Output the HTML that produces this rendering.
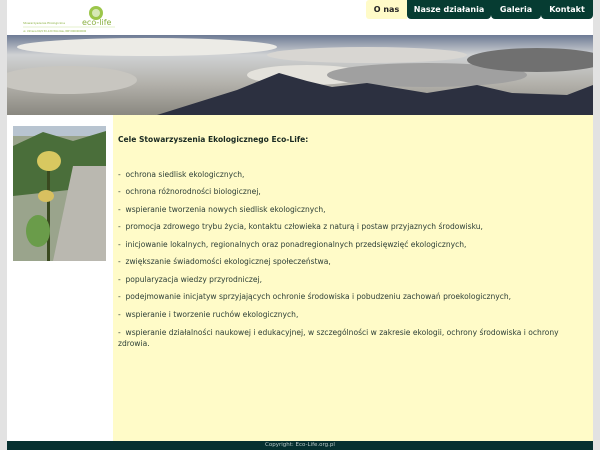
<!DOCTYPE html>
<html><head><meta charset="utf-8"><style>
*{margin:0;padding:0;box-sizing:border-box}
body{width:600px;height:450px;background:#e2e2e2;font-family:"DejaVu Sans",sans-serif;overflow:hidden;position:relative}
#wrap{position:absolute;left:7px;top:0;width:586px;height:450px;background:#fff}
.nav{position:absolute;top:0;height:19px;font-size:8px;font-weight:bold;line-height:19px;text-align:center;color:#fff;background:#063c32}
.ban{position:absolute;left:0;top:35px;width:586px;height:80px}
.left{position:absolute;left:0;top:115px;width:106px;height:326px;background:#fff}
.main{position:absolute;left:106px;top:115px;width:480px;height:326px;background:#fffbc8;color:#2c3e36;font-size:7.55px}
.main p{position:absolute;left:5px;white-space:nowrap}
.foot{position:absolute;left:0;top:441px;width:586px;height:9px;background:#063030;color:#b8c8c8;font-size:5.5px;text-align:center;line-height:9px}
</style></head><body><div id="wrap">
<svg style="position:absolute;left:14px;top:2px" width="100" height="32">
<circle cx="75" cy="11" r="7" fill="#9cc64a"/><circle cx="75" cy="11" r="4" fill="#fff" opacity=".6"/>
<text x="2" y="22" font-size="3" fill="#8ab040" font-family="DejaVu Sans">Stowarzyszenie Ekologiczne</text>
<text x="61" y="23" font-size="8" fill="#8ab040" font-family="DejaVu Sans">eco-life</text>
<line x1="2" y1="25" x2="94" y2="25" stroke="#cde39a" stroke-width=".5"/>
<text x="2" y="30" font-size="2.5" fill="#8ab040" font-family="DejaVu Sans">ul. Ulmana 60/4 50-120 Wrocław, NIP 0000000000</text>
</svg>
<div class="nav" style="left:359px;width:41px;background:#fffbc8;color:#222;border-radius:3px 0 0 3px">O nas</div>
<div class="nav" style="left:400px;width:84px;border-radius:0 0 4px 4px">Nasze działania</div>
<div class="nav" style="left:484px;width:50px;border-radius:0 0 4px 4px">Galeria</div>
<div class="nav" style="left:534px;width:52px;border-radius:0 0 4px 4px">Kontakt</div>
<svg class="ban" viewBox="0 0 586 80" preserveAspectRatio="none">
<defs><linearGradient id="g" x1="0" y1="0" x2="0" y2="1"><stop offset="0" stop-color="#6c7a94"/><stop offset=".25" stop-color="#d0d2d4"/><stop offset=".6" stop-color="#b4b2ac"/><stop offset="1" stop-color="#8a8880"/></linearGradient></defs>
<rect width="586" height="80" fill="url(#g)"/>
<ellipse cx="140" cy="12" rx="130" ry="9" fill="#ecebe6"/>
<ellipse cx="60" cy="45" rx="70" ry="14" fill="#c8c6c0"/>
<ellipse cx="300" cy="40" rx="60" ry="10" fill="#e4e2dc"/>
<ellipse cx="360" cy="20" rx="100" ry="8" fill="#d8d6d2"/>
<ellipse cx="420" cy="40" rx="100" ry="12" fill="#a0a0a0"/>
<ellipse cx="530" cy="25" rx="70" ry="12" fill="#707070"/>
<path d="M150 80 L230 55 L272 38 L300 46 L325 52 L360 48 L420 58 L470 50 L505 58 L560 60 L586 50 L586 80Z" fill="#2c3040"/>
</svg>
<div class="left"><svg style="position:absolute;left:6px;top:11px" width="93" height="135">
<rect width="93" height="135" fill="#9aa48c"/><rect width="93" height="10" fill="#b8c4d0"/>
<path d="M0 20 L30 6 L60 15 L93 5 L93 60 L0 70Z" fill="#4a6e3a"/>
<path d="M40 135 L60 40 L93 40 L93 135Z" fill="#bab8b0"/>
<rect x="34" y="35" width="3" height="100" fill="#3a4a20"/>
<ellipse cx="36" cy="35" rx="12" ry="10" fill="#d8c860"/><ellipse cx="33" cy="70" rx="8" ry="6" fill="#d8c060"/>
<ellipse cx="25" cy="105" rx="12" ry="16" fill="#6a9c4a"/></svg></div>
<div class="main">
<p style="top:20px;font-weight:bold;color:#1a2a22">Cele Stowarzyszenia Ekologicznego Eco-Life:</p>
<p style="top:55px">-&nbsp; ochrona siedlisk ekologicznych,</p>
<p style="top:72px">-&nbsp; ochrona różnorodności biologicznej,</p>
<p style="top:90px">-&nbsp; wspieranie tworzenia nowych siedlisk ekologicznych,</p>
<p style="top:107px">-&nbsp; promocja zdrowego trybu życia, kontaktu człowieka z naturą i postaw przyjaznych środowisku,</p>
<p style="top:125px">-&nbsp; inicjowanie lokalnych, regionalnych oraz ponadregionalnych przedsięwzięć ekologicznych,</p>
<p style="top:142px">-&nbsp; zwiększanie świadomości ekologicznej społeczeństwa,</p>
<p style="top:160px">-&nbsp; popularyzacja wiedzy przyrodniczej,</p>
<p style="top:177px">-&nbsp; podejmowanie inicjatyw sprzyjających ochronie środowiska i pobudzeniu zachowań proekologicznych,</p>
<p style="top:195px">-&nbsp; wspieranie i tworzenie ruchów ekologicznych,</p>
<p style="top:212px;line-height:11px">-&nbsp; wspieranie działalności naukowej i edukacyjnej, w szczególności w zakresie ekologii, ochrony środowiska i ochrony<br>zdrowia.</p>
</div>
<div class="foot">Copyright: Eco-Life.org.pl</div>
</div></body></html>
